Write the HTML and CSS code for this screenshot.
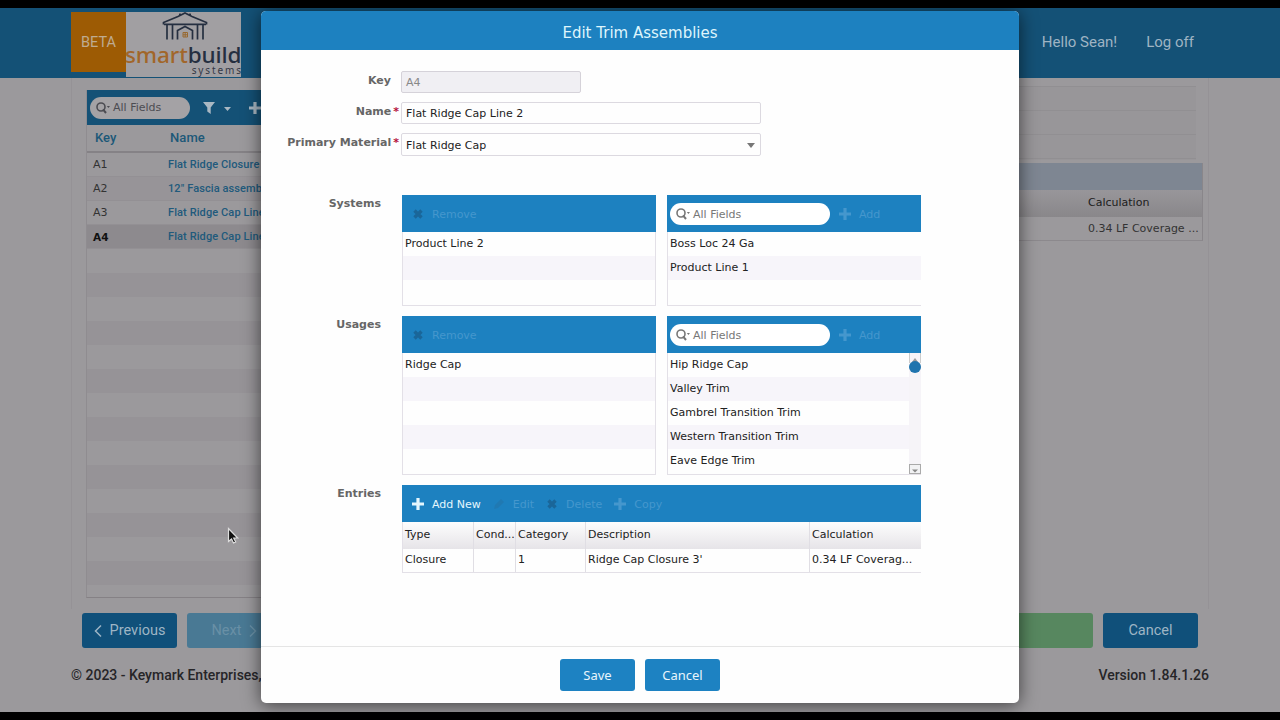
FILE: index.html
```html
<!DOCTYPE html>
<html lang="en">
<head>
  <meta charset="UTF-8">
  <meta name="viewport" content="width=device-width, initial-scale=1.0">
  <title>SmartBuild Systems - Edit Trim Assemblies</title>
  <link rel="stylesheet" href="styles.css">
</head>
<body>
  <!-- shared icons -->
  <svg class="defs" width="0" height="0">
    <symbol id="plus" viewBox="0 0 12 12"><path d="M4.4 0h3.2v4.4H12v3.2H7.6V12H4.4V7.6H0V4.4h4.4z" fill="currentColor"/></symbol>
    <symbol id="cross" viewBox="0 0 12 12"><path d="M2.500 2.500l7 7M9.500 2.500l-7 7" stroke="currentColor" stroke-width="3.400"/></symbol>
    <symbol id="pencil" viewBox="0 0 12 12"><path d="M1 11l1-4 6-6 3 3-6 6z" fill="currentColor"/></symbol>
    <symbol id="search" viewBox="0 0 16 12"><circle cx="5" cy="5" r="4" fill="none" stroke="currentColor" stroke-width="1.6"/><path d="M7 7.300L10 11" stroke="currentColor" stroke-width="2"/><path d="M10.800 4h3.200l-1.600 2z" fill="currentColor"/></symbol>
  </svg>

  <div class="page">
    <header class="site-header">
      <div class="beta">BETA</div>
      <div class="logo">
        <svg class="logo-barn" width="46" height="29" viewBox="0 0 46 29" fill="none" stroke="#252f40" stroke-width="1.7">
          <path d="M1.500 12.500V10.500L16 4.500L23 1l7 3.500L44.500 10.500v2M18 4V1.500M28 4V1.500"/>
          <path d="M2 12.300h42M5 12.500v15M10.500 12.500v15M35.500 12.500v15M41 12.500v15M15.500 27.500V18.500L23 14.500l7.500 4v9"/>
          <path d="M21 20.500h4.500v4.500H21zM23.200 20.500v4.500M21 22.800h4.500" stroke="#98692f" stroke-width="1"/>
        </svg>
        <div class="logo-name"><span>smart</span>build</div>
        <div class="logo-sub">systems</div>
      </div>
      <nav>
        <a>Hello Sean!</a>
        <a>Log off</a>
      </nav>
    </header>

    <main>
      <section class="list">
        <div class="list-bar">
          <div class="search"><svg width="16" height="12"><use href="#search"/></svg>All Fields</div>
          <svg class="filter" width="30" height="14" viewBox="0 0 30 14"><path d="M0 1h12L7.700 6.500V13L4.300 10.500v-4z" fill="currentColor"/><path d="M21 6h7l-3.500 4z" fill="currentColor"/></svg>
          <svg width="12" height="12"><use href="#plus"/></svg>
        </div>
        <div class="list-row list-head"><span>Key</span><span>Name</span></div>
        <div class="list-row"><span>A1</span><span>Flat Ridge Closure</span></div>
        <div class="list-row"><span>A2</span><span>12" Fascia assembly</span></div>
        <div class="list-row"><span>A3</span><span>Flat Ridge Cap Line 1</span></div>
        <div class="list-row selected"><span>A4</span><span>Flat Ridge Cap Line 2</span></div>
        <div class="list-empty"></div>
      </section>
      <section class="detail">
        <div class="detail-rows"></div>
        <div class="detail-table">
          <div class="detail-bar"></div>
          <div class="detail-head">Calculation</div>
          <div class="detail-cell">0.34 LF Coverage ...</div>
        </div>
      </section>
    </main>

    <div class="wizard">
      <div class="btn dim"><svg width="8" height="14" viewBox="0 0 8 14"><path d="M7 1.500L1.500 7 7 12.500" fill="none" stroke="currentColor" stroke-width="1.500"/></svg>Previous</div>
      <div class="btn dim next">Next<svg width="8" height="14" viewBox="0 0 8 14"><path d="M1 1.500L6.500 7 1 12.500" fill="none" stroke="currentColor" stroke-width="1.500"/></svg></div>
      <div class="btn dim finish"></div>
      <div class="btn dim">Cancel</div>
    </div>
    <footer><span>© 2023 - Keymark Enterprises, LLC</span><span>Version 1.84.1.26</span></footer>
    <svg class="cursor" width="13" height="18" viewBox="0 0 13 18"><path d="M1.500 1.500v13l3-2.500 2 4 2.200-1-2-4h4z" fill="#111" stroke="#ddd" stroke-width="1.200"/></svg>
  </div>

  <div class="modal">
    <div class="modal-title">Edit Trim Assemblies</div>
    <div class="modal-body">
      <div class="field key">
        <label>Key</label>
        <div class="input disabled">A4</div>
      </div>
      <div class="field">
        <label>Name<b>*</b></label>
        <div class="input">Flat Ridge Cap Line 2</div>
      </div>
      <div class="field">
        <label>Primary Material<b>*</b></label>
        <div class="input select">Flat Ridge Cap<svg width="8" height="5" viewBox="0 0 8 5"><path d="M0 0h8L4 5z" fill="#777"/></svg></div>
      </div>

      <div class="group systems">
        <label>Systems</label>
        <div class="panel">
          <div class="bar"><span class="tool off"><svg class="dark" width="12" height="12"><use href="#cross"/></svg>Remove</span></div>
          <div class="rows"><div>Product Line 2</div><div></div><div></div></div>
        </div>
        <div class="panel">
          <div class="bar">
            <div class="search"><svg width="16" height="12"><use href="#search"/></svg>All Fields</div>
            <span class="tool off"><svg width="12" height="12"><use href="#plus"/></svg>Add</span>
          </div>
          <div class="rows"><div>Boss Loc 24 Ga</div><div>Product Line 1</div><div></div></div>
        </div>
      </div>

      <div class="group usages">
        <label>Usages</label>
        <div class="panel">
          <div class="bar"><span class="tool off"><svg class="dark" width="12" height="12"><use href="#cross"/></svg>Remove</span></div>
          <div class="rows"><div>Ridge Cap</div><div></div><div></div><div></div><div></div></div>
        </div>
        <div class="panel">
          <div class="bar">
            <div class="search"><svg width="16" height="12"><use href="#search"/></svg>All Fields</div>
            <span class="tool off"><svg width="12" height="12"><use href="#plus"/></svg>Add</span>
          </div>
          <div class="scroll-area">
            <div class="rows"><div>Hip Ridge Cap</div><div>Valley Trim</div><div>Gambrel Transition Trim</div><div>Western Transition Trim</div><div>Eave Edge Trim</div></div>
            <div class="scrollbar">
              <svg width="12" height="20" viewBox="0 0 12 20"><path d="M.5 0v10M11.500 0v10" stroke="#ccc"/><path d="M3 9l3-4 3 4z" fill="#999"/><circle cx="6" cy="14" r="6" fill="#1f74ae"/></svg>
              <svg width="12" height="10" viewBox="0 0 12 10"><rect x=".5" y=".5" width="11" height="9" fill="#f2f2f4" stroke="#aaa"/><path d="M3 5.500h6L6 8.500z" fill="#888"/></svg>
            </div>
          </div>
        </div>
      </div>

      <div class="group entries">
        <label>Entries</label>
        <div class="panel wide">
          <div class="bar">
            <span class="tool"><svg width="12" height="12"><use href="#plus"/></svg>Add New</span>
            <span class="tool off"><svg class="faint" width="12" height="12"><use href="#pencil"/></svg>Edit</span>
            <span class="tool off"><svg class="dark" width="12" height="12"><use href="#cross"/></svg>Delete</span>
            <span class="tool off"><svg width="12" height="12"><use href="#plus"/></svg>Copy</span>
          </div>
          <div class="entry entry-head"><span>Type</span><span>Cond...</span><span>Category</span><span>Description</span><span>Calculation</span></div>
          <div class="entry"><span>Closure</span><span></span><span>1</span><span>Ridge Cap Closure 3'</span><span>0.34 LF Coverag...</span></div>
        </div>
      </div>
    </div>
    <div class="modal-footer">
      <div class="btn">Save</div>
      <div class="btn">Cancel</div>
    </div>
  </div>
</body>
</html>
```
FILE: styles.css
```css
* {
  box-sizing: border-box;
}
body {
  margin: 0;
  width: 1280px;
  height: 720px;
  overflow: hidden;
  background: #000;
  position: relative;
  font-family: "DejaVu Sans", Verdana, sans-serif;
  font-size: 11px;
  color: #222;
}
.defs {
  position: absolute;
}

/* page behind the dialog */
.page {
  position: relative;
  margin-top: 8px;
  height: 704px;
  background: #9b999c;
  overflow: hidden;
  display: flow-root;
}
.site-header {
  display: flex;
  height: 70px;
  padding: 4px 86px 0 71px;
  background: #145176;
  font-family: Roboto, sans-serif;
  color: #9fb4c3;
}
.beta {
  width: 55px;
  height: 60px;
  line-height: 62px;
  text-align: center;
  background: #9d5b04;
  color: #bfab91;
  font-size: 14.5px;
}
.logo {
  width: 115px;
  height: 65px;
  background: #a19fa2;
  overflow: hidden;
  font-family: "Noto Sans", sans-serif;
}
.logo-barn {
  display: block;
  margin: 0 0 0 36px;
}
.logo-name {
  height: 25px;
  line-height: 27px;
  margin-left: -1px;
  font-size: 22.5px;
  font-weight: 500;
  letter-spacing: -0.1px;
  white-space: nowrap;
  color: #252f40;
}
.logo-name span {
  color: #a1662a;
}
.logo-sub {
  height: 11px;
  line-height: 9px;
  text-align: right;
  font-size: 10px;
  letter-spacing: 1.9px;
  margin-right: -2px;
  color: #333845;
}
nav {
  display: flex;
  gap: 29px;
  margin-left: auto;
  line-height: 61px;
  font-size: 15px;
}
main {
  display: flex;
  justify-content: space-between;
  height: 531px;
  margin: 0 71px;
  border: solid #959296;
  border-width: 0 1px;
}
.list {
  width: 300px;
  height: 508px;
  margin: 12px 0 0 14px;
  border-left: 1px solid #8f8c90;
  border-bottom: 1px solid #858185;
}
.list-bar {
  display: flex;
  align-items: center;
  height: 35px;
  padding-left: 3px;
  background: #145176;
  color: #aab8c3;
}
.search {
  display: flex;
  align-items: center;
  gap: 1px;
  width: 160px;
  height: 22px;
  padding-left: 6px;
  border-radius: 11px;
  background: #fff;
  color: #777;
}
.list .search {
  width: 100px;
  background: #a4a2a5;
  color: #4c4c52;
}
.filter {
  margin: 0 16px 0 13px;
}
.list-row {
  display: flex;
  height: 24px;
  line-height: 24px;
  padding-left: 6px;
  border-bottom: 1px solid #939094;
}
.list-row span:first-child {
  width: 75px;
  color: #333;
}
.list-row span:last-child {
  font-family: Roboto, sans-serif;
  font-weight: 500;
  font-size: 11px;
  white-space: nowrap;
  letter-spacing: 0.1px;
  color: #215a7c;
}
.list-row.list-head {
  height: 28px;
  line-height: 25px;
  padding-left: 8px;
  font-family: Roboto, sans-serif;
  font-weight: 500;
  border-bottom: 2px solid #858286;
}
.list-head span:first-child, .list-head span:last-child {
  font-size: 13px;
  color: #1c5878;
}
.list-row:nth-child(4) {
  background: #979498;
}
.list-row.selected {
  background: #8d8a8e;
}
.selected span:first-child {
  font-weight: bold;
  font-size: 10.5px;
  color: #111;
}
.list-empty {
  height: 340px;
  background: repeating-linear-gradient(#9b999c 0 24px, #969397 24px 48px);
}
.detail {
  width: 220px;
  padding-top: 8px;
  margin-right: 5px;
}
.detail-rows {
  height: 74px;
  margin-right: 7px;
  background: repeating-linear-gradient(#918f92 0 1px, #989699 1px 24px);
}
.detail-table {
  margin-top: 3px;
  border-right: 1px solid #89868a;
  border-bottom: 1px solid #8c898d;
}
.detail-bar {
  height: 27px;
  background: #7e8692;
}
.detail-head, .detail-cell {
  padding-left: 105px;
  white-space: nowrap;
}
.detail-head {
  height: 27px;
  line-height: 25px;
  background: linear-gradient(#98969a, #89878a);
  color: #1c1c1c;
}
.detail-cell {
  height: 23px;
  line-height: 23px;
  color: #333;
}
.btn {
  display: flex;
  align-items: center;
  justify-content: center;
  width: 75px;
  height: 32px;
  border-radius: 3px;
  background: #1d82c2;
  color: #e8f5fc;
  font-family: "Noto Sans", sans-serif;
  font-size: 13px;
}
.btn.dim {
  gap: 8px;
  width: 95px;
  height: 35px;
  background: #10507a;
  color: #9eb5c5;
  font-family: Roboto, sans-serif;
  font-size: 14.5px;
}
.btn.dim svg {
  flex: none;
}
.wizard {
  display: flex;
  gap: 10px;
  padding: 4px 82px 0;
}
.btn.dim.next {
  background: #497994;
  color: #6990a6;
}
.btn.dim.finish {
  margin-left: auto;
  background: #57875f;
}
footer {
  display: flex;
  justify-content: space-between;
  padding: 18px 71px 0;
  line-height: 18px;
  font-family: Roboto, sans-serif;
  font-weight: 500;
  font-size: 14px;
  color: #262528;
}
.cursor {
  position: absolute;
  left: 227px;
  top: 519px;
}

/* dialog */
.modal {
  position: absolute;
  left: 261px;
  top: 11px;
  width: 758px;
  height: 692px;
  display: flex;
  flex-direction: column;
  border-radius: 5px;
  overflow: hidden;
  background: #fefefe;
  box-shadow: 0 2px 18px rgba(0, 0, 0, 0.6);
}
.modal-title {
  height: 39px;
  line-height: 45px;
  text-align: center;
  font-size: 15px;
  background: #1d81c0;
  color: #dff5fc;
}
.modal-body {
  flex: 1;
  padding-top: 21px;
}
.field {
  display: flex;
  margin-bottom: 9px;
}
label {
  width: 120px;
  font-weight: bold;
  text-align: right;
  color: #666;
}
.field label {
  width: 140px;
  line-height: 20px;
  padding-right: 2px;
}
.key label {
  padding-right: 10px;
}
label b {
  margin-left: 2px;
  color: #b5123c;
}
.input {
  display: flex;
  align-items: center;
  justify-content: space-between;
  width: 360px;
  height: 22px;
  padding: 1px 5px 0 4px;
  border: 1px solid #dcd9e0;
  border-radius: 2px;
  color: #222;
}
.input.select {
  height: 23px;
}
.input.disabled {
  width: 180px;
  background: #f0eff3;
  border-color: #d5d2d9;
  color: #888;
}
.group {
  display: flex;
  gap: 11px;
}
.group label {
  width: 120px;
  margin-right: 10px;
  line-height: 18px;
}
.systems {
  margin-top: 39px;
}
.usages, .entries {
  margin-top: 10px;
}
.panel {
  width: 254px;
  border: 1px solid #e3e0e7;
  border-top: 0;
}
.panel + .panel {
  border-right: 0;
}
.panel.wide {
  width: 519px;
  border-right: 0;
}
.bar {
  display: flex;
  align-items: center;
  height: 37px;
  margin: 0 0 0 -1px;
  padding: 1px 0 0 3px;
  background: #1d81c0;
  color: #e4f6fd;
}
.panel:not(.wide) .bar {
  margin-right: -1px;
}
.panel + .panel:not(.wide) .bar {
  margin-right: 0;
}
.tool {
  display: flex;
  align-items: center;
  gap: 8px;
  margin-left: 7px;
}
.search + .tool {
  margin-left: 9px;
}
.tool + .tool {
  margin-left: 12px;
}
.tool.off {
  color: #4597cd;
}
.tool .dark {
  color: #1a6699;
}
.tool .faint {
  color: #2079b2;
}
.rows {
  flex: 1;
  height: 73px;
}
.rows div {
  height: 24px;
  line-height: 24px;
  padding-left: 2px;
}
.rows div:nth-child(even) {
  background: #f7f5fa;
}
.usages .rows {
  height: 121px;
}
.scroll-area {
  display: flex;
}
.scrollbar {
  display: flex;
  flex-direction: column;
  justify-content: space-between;
  width: 12px;
  background: #f6f4f8;
}
.entry {
  display: grid;
  grid-template-columns: 70px 42px 70px 224px 1fr;
  height: 23px;
  line-height: 22px;
  white-space: nowrap;
}
.entry span {
  padding-left: 2px;
  border-left: 1px solid #e0dee4;
}
.entry span:first-child {
  border-left: 0;
}
.entry-head {
  height: 27px;
  line-height: 25px;
  background: linear-gradient(#fdfdfd, #e6e4e8);
}
.modal-footer {
  display: flex;
  justify-content: center;
  gap: 10px;
  height: 57px;
  padding-top: 12px;
  border-top: 1px solid #e5e5e5;
}
```
